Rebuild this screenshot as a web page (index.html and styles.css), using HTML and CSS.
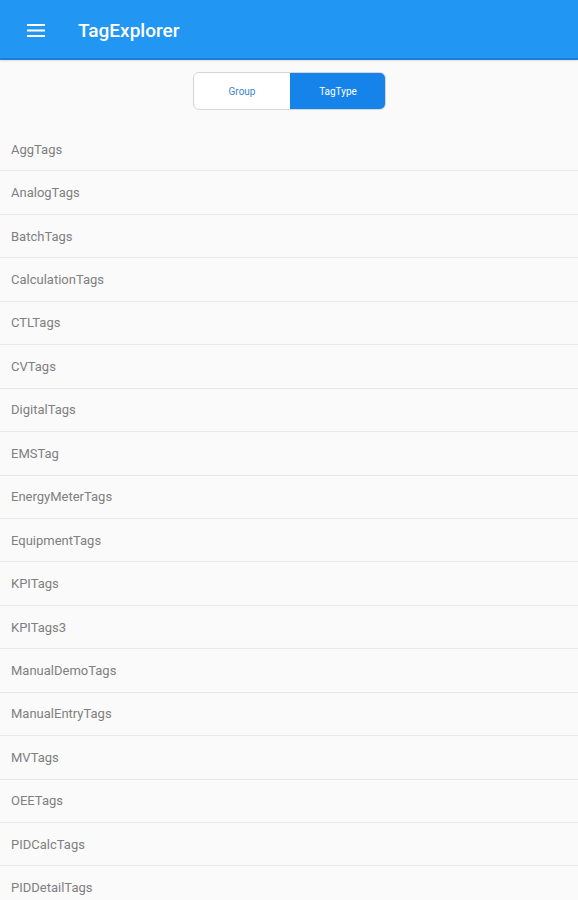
FILE: index.html
```html
<!DOCTYPE html>
<html lang="en">
<head>
  <meta charset="UTF-8" />
  <title>TagExplorer</title>
  <meta name="viewport" content="width=device-width, initial-scale=1.0" />
  <link rel="stylesheet" href="styles.css">
</head>
<body>
  <header class="appbar">
    <svg class="menu" width="18" height="13" viewBox="0 0 18 13">
      <rect x="0" y="0" width="18" height="2" fill="#fff"/>
      <rect x="0" y="5.5" width="18" height="2" fill="#fff"/>
      <rect x="0" y="11" width="18" height="2" fill="#fff"/>
    </svg>
    <h1>TagExplorer</h1>
  </header>

  <div class="toggle">
    <div class="segment">
      <span class="seg">Group</span>
      <span class="seg active">TagType</span>
    </div>
  </div>

  <ul class="tags">
    <li>AggTags</li>
    <li>AnalogTags</li>
    <li>BatchTags</li>
    <li>CalculationTags</li>
    <li>CTLTags</li>
    <li>CVTags</li>
    <li>DigitalTags</li>
    <li>EMSTag</li>
    <li>EnergyMeterTags</li>
    <li>EquipmentTags</li>
    <li>KPITags</li>
    <li>KPITags3</li>
    <li>ManualDemoTags</li>
    <li>ManualEntryTags</li>
    <li>MVTags</li>
    <li>OEETags</li>
    <li>PIDCalcTags</li>
    <li>PIDDetailTags</li>
  </ul>
</body>
</html>
```

FILE: styles.css
```css
body {
  margin: 0;
  background: #FAFAFA;
  font-family: Roboto, 'Noto Sans', sans-serif;
  overflow: hidden;
}
.appbar {
  height: 60px;
  box-sizing: border-box;
  background: #2196F3;
  border-bottom: 2px solid #1A7FD6;
  display: flex;
  align-items: center;
  padding-left: 27px;
  box-shadow: 0 1px 2px rgba(0,0,0,0.12);
}
.menu {
  display: block;
  margin-top: 2px;
}
.appbar h1 {
  margin: 2px 0 0 33px;
  color: #FFFFFF;
  font-size: 19px;
  font-weight: 500;
}
.toggle {
  display: flex;
  justify-content: center;
  padding-top: 12px;
  height: 68px;
  box-sizing: border-box;
  padding-left: 1px;
}
.segment {
  display: flex;
  width: 193px;
  height: 38px;
  border: 1px solid #D6D6D6;
  border-radius: 6px;
  box-sizing: border-box;
  overflow: hidden;
  background: #FFFFFF;
}
.seg {
  flex: 1;
  display: flex;
  align-items: center;
  justify-content: center;
  font-size: 10px;
  color: #3D86C6;
}
.seg.active {
  background: #1583EA;
  color: #FFFFFF;
  margin: -1px -1px -1px 0;
}
.tags {
  list-style: none;
  margin: 0;
  padding: 0;
}
.tags li {
  height: 43.44px;
  box-sizing: border-box;
  border-bottom: 1px solid #E8E8E8;
  display: flex;
  align-items: center;
  padding-left: 11px;
  font-size: 13px;
  color: #808080;
}
```
